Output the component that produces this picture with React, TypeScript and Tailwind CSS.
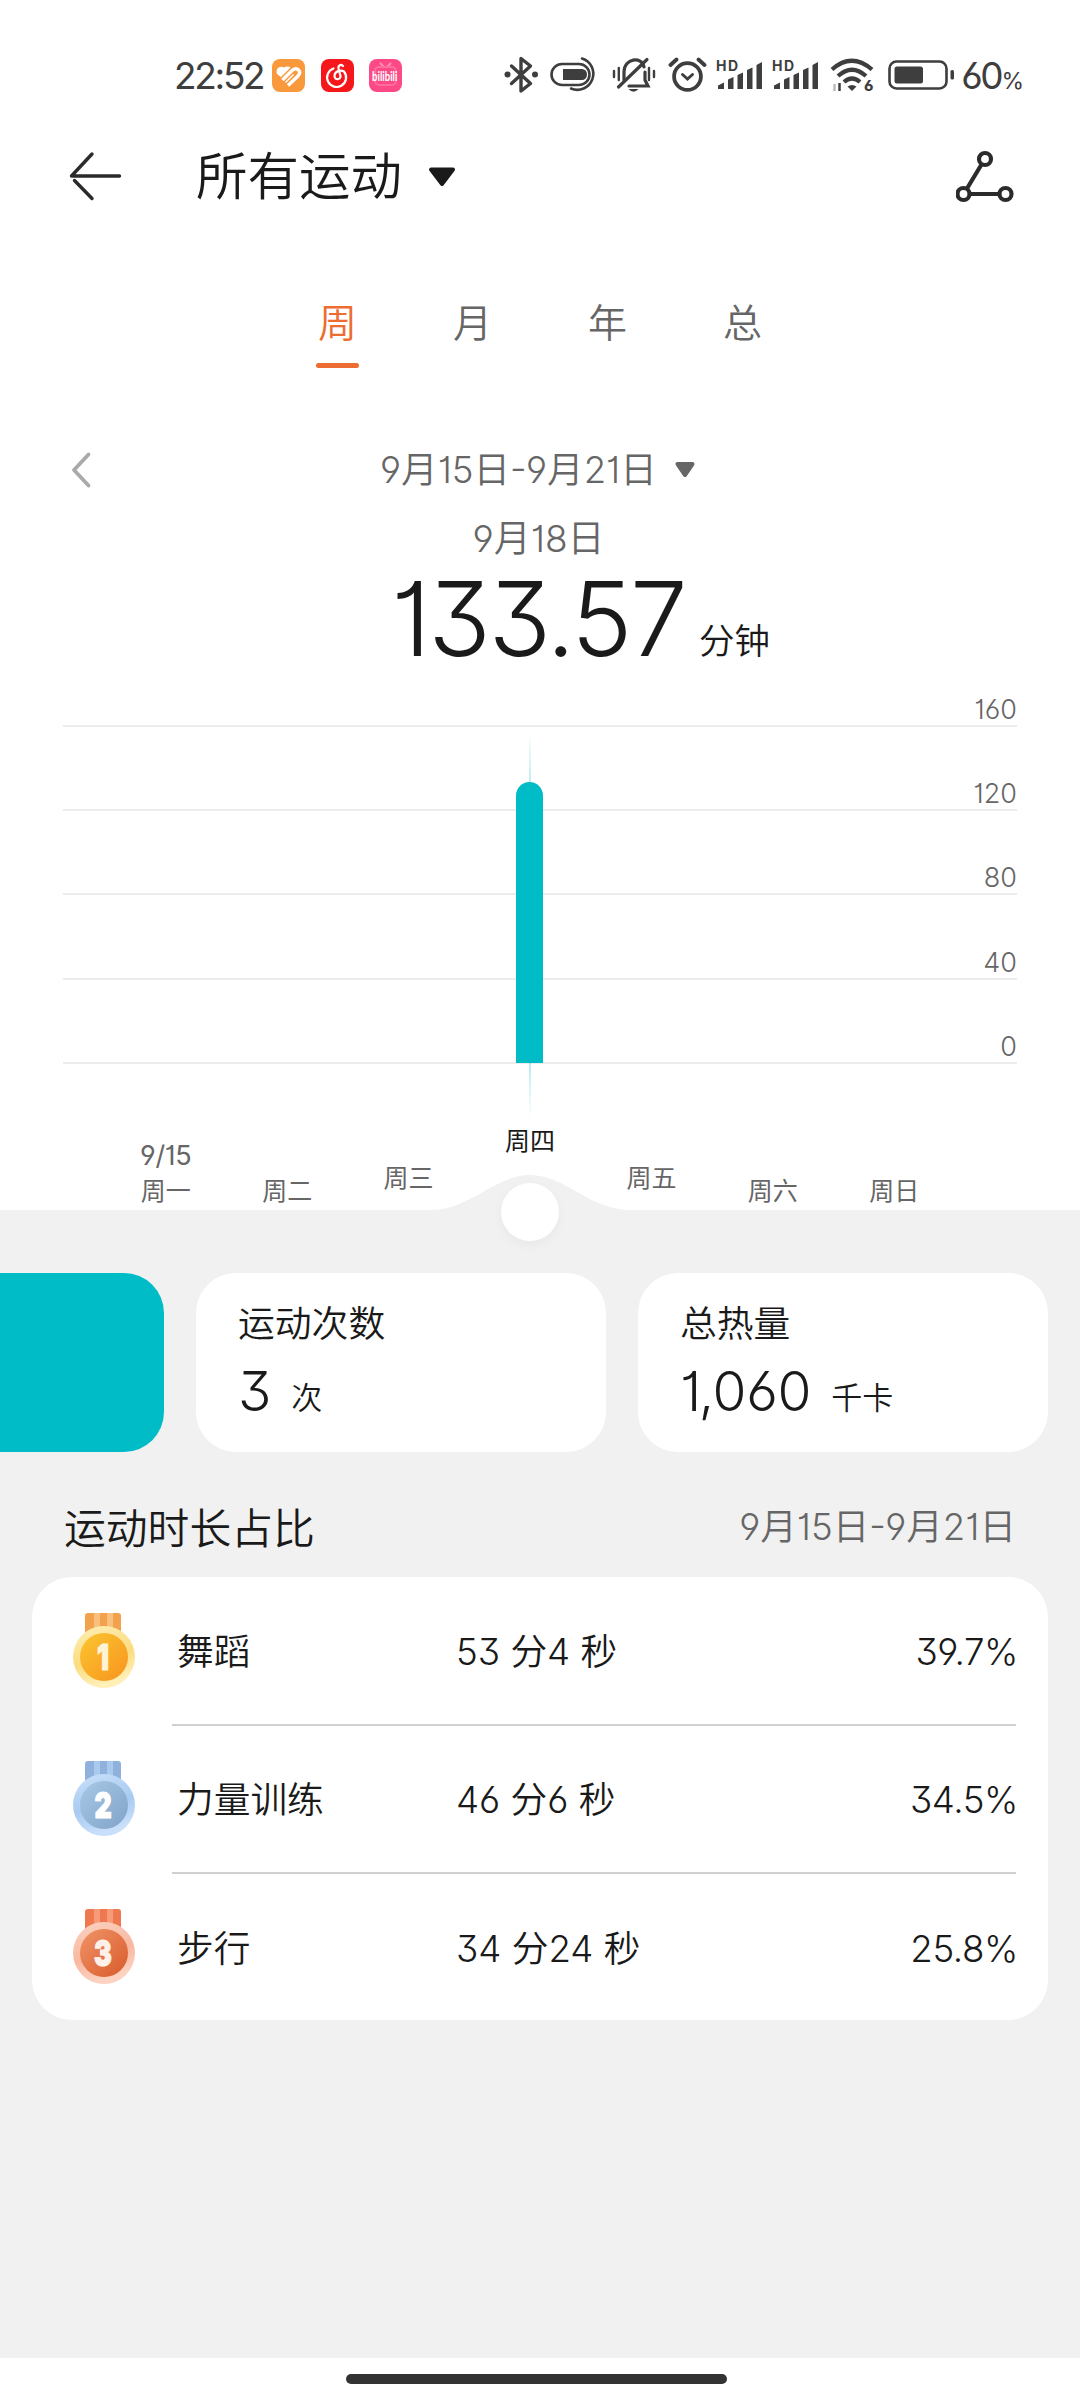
const days = [
  { label: '周一', date: '9/15', pad: 'pb-[6px]' },
  { label: '周二', pad: 'pb-[6px]' },
  { label: '周三', pad: 'pb-[19px]' },
  { label: '周四', pad: 'pb-[56px]', active: true },
  { label: '周五', pad: 'pb-[19px]' },
  { label: '周六', pad: 'pb-[6px]' },
  { label: '周日', pad: 'pb-[6px]' },
]

const medals = [
  { id: 'gold', ribbon: '#f2a24c', stripe: '#f9bf7c', rimA: '#fff0b8', rimB: '#fbdc80', faceA: '#fbc62f', faceB: '#f8931f', digit: '#fff3d6' },
  { id: 'silver', ribbon: '#8fb1dc', stripe: '#a9c9ef', rimA: '#c9e0fa', rimB: '#a9cbf2', faceA: '#a9c8e6', faceB: '#7fa3c8', digit: '#ffffff' },
  { id: 'bronze', ribbon: '#ee7850', stripe: '#f69a78', rimA: '#fcd3c2', rimB: '#f8b89f', faceA: '#f09468', faceB: '#d95a2b', digit: '#fff1ea' },
]

const rows = [
  { name: '舞蹈', time: '53 分4 秒', percent: '39.7%' },
  { name: '力量训练', time: '46 分6 秒', percent: '34.5%' },
  { name: '步行', time: '34 分24 秒', percent: '25.8%' },
]

function SignalIcon() {
  return (
    <svg className="overflow-visible" width="48" height="34" viewBox="0 0 48 34" fill="#3e3e3e">
      <text x="0" y="13" fontSize="14" fontWeight="700" fontFamily="Inter, sans-serif" textLength="22">HD</text>
      <path d="M2 31v-3.500l6-3v6.500zM12 31v-9.500l5.500-2.500v12zM21.500 31v-14l5.500-2.500v16.500zM31 31v-19l5.500-2.500v21.500zM40.500 31v-24l5.500-3v27z" />
    </svg>
  )
}

function StatusBar() {
  return (
    <div className="flex h-[110px] items-center pt-[40px] pr-[56px] pl-[174px]">
      <div className="flex h-[70px] w-full items-center justify-between">
        <div className="flex items-center">
          <span className="w-[98px] text-[37px] leading-none tracking-[-2.300px] whitespace-nowrap text-[#3e3e3e]">22:52</span>
          <div className="flex gap-[15.500px]">
            <svg width="33" height="33" viewBox="0 0 33 33">
              <rect width="33" height="33" rx="8" fill="#f9993c" />
              <path d="M5 15C3 9.500 8 6 12 8.500 14 7 17 7.500 18.500 8.500L9 18z" fill="#fff" />
              <path d="M10.500 21l9.500-9.500q4-3 6.500-.5t-.5 6L16 26.500" fill="none" stroke="#fff" strokeWidth="3.400" />
              <path d="M13.500 23.500l8-8" stroke="#fff" strokeWidth="1.500" />
            </svg>
            <svg width="33" height="33" viewBox="0 0 33 33" fill="none" stroke="#fff" strokeWidth="2.200" strokeLinecap="round">
              <rect width="33" height="33" rx="8" fill="#f6171b" stroke="none" />
              <path d="M12.500 9.500A9.500 9.500 0 1 0 23 12.500C20 10.500 13.500 12 13.500 17c0 4.500 6.500 4 6 0L17.500 9.500C17 6 20 5 22 7" />
            </svg>
            <svg className="overflow-visible" width="33" height="33" viewBox="0 0 33 33">
              <rect width="33" height="33" rx="8" fill="#fd4a86" />
              <path d="M11 4l4 4M22 4l-4 4" stroke="#ff8fb5" strokeWidth="2" />
              <rect x="6" y="8" width="21" height="18" rx="4" fill="none" stroke="#ff6d9e" strokeWidth="2" />
              <text transform="translate(3 22) scale(.74 1)" fontSize="13" fontWeight="700" fill="#fff" fontFamily="Lato, sans-serif">bilibili</text>
            </svg>
          </div>
        </div>
        <div className="flex items-center text-[#3e3e3e]">
          <svg className="mr-[11px]" width="35" height="38" viewBox="0 0 35 38" fill="none" stroke="currentColor" strokeWidth="3.400" strokeLinejoin="round" strokeLinecap="round">
            <path d="M7.500 10l19 17.500-9.500 7.500V2.500l9.500 7.500L7.500 27.500" />
            <circle cx="3.500" cy="18.500" r="3" fill="currentColor" stroke="none" />
            <circle cx="31" cy="18.500" r="3" fill="currentColor" stroke="none" />
          </svg>
          <svg className="mr-[11px]" width="51" height="38" viewBox="0 0 51 38" fill="none" stroke="currentColor" strokeWidth="2.600" strokeLinecap="round">
            <rect x="1.500" y="8" width="38" height="21" rx="10.500" />
            <path d="M13 13h19a5 5.500 0 0 1 0 11H13z" fill="currentColor" stroke="none" />
            <path d="M32 2.500a16 16 0 1 1-11 30" />
          </svg>
          <svg className="mr-[12px]" width="44" height="38" viewBox="0 0 44 38" fill="none" stroke="currentColor" strokeWidth="3.200" strokeLinecap="round">
            <path d="M2 15v6M6.800 12v12M42 15v6M37 12v12" strokeWidth="2.400" />
            <path d="M12 24v-8c0-14 18-16 20-5M33 16v8l3 6H17" />
            <path d="M6.500 31L35 3.500" />
            <path d="M16.500 33h10q-5 5.500-10 0z" fill="currentColor" stroke="none" />
          </svg>
          <svg className="mr-[9px]" width="39" height="38" viewBox="0 0 39 38" fill="none" stroke="currentColor" strokeWidth="3.800" strokeLinecap="round">
            <circle cx="19.500" cy="20.500" r="13.400" />
            <path d="M14.500 18.500l5 4.500 5-4.500" strokeWidth="3" />
            <path d="M2.500 9l6-5.500M36.500 9l-6-5.500" />
          </svg>
          <div className="mr-[10px] flex gap-2">
            <SignalIcon />
            <SignalIcon />
          </div>
          <svg className="mr-[13px] overflow-visible" width="45" height="36" viewBox="0 0 45 36" fill="none" stroke="currentColor" strokeWidth="4.200">
            <path d="M2 12.500q19.500-17.500 40 0M8 19q14-12.500 28 0M14 25q8-7 16 0" />
            <path d="M17.500 29.500q4.500-3 9 0l-4.500 4.500z" fill="currentColor" stroke="none" />
            <path d="M9.500 26v8" strokeWidth="2.500" />
            <path d="M4.500 27v7" stroke="#bbb" strokeWidth="2.500" />
            <text x="34" y="34" fontSize="15" fontWeight="800" fill="currentColor" stroke="none" fontFamily="Inter, sans-serif">6</text>
          </svg>
          <svg width="67" height="31" viewBox="0 0 67 31" fill="none">
            <rect x="1.500" y="1.500" width="57" height="27" rx="7" stroke="currentColor" strokeWidth="2.600" />
            <rect x="6.500" y="6.500" width="28.500" height="17" rx="2.500" fill="currentColor" />
            <rect x="62.500" y="10" width="3.500" height="9.500" rx="1.500" fill="currentColor" />
          </svg>
          <div className="ml-[6px] flex items-baseline whitespace-nowrap">
            <span className="text-[37px] leading-none tracking-[-2.300px]">60</span>
            <span className="text-[23px] leading-none">%</span>
          </div>
        </div>
      </div>
    </div>
  )
}

function Header() {
  return (
    <header className="flex h-[132px] items-center justify-between pr-[64px] pl-[68px]">
      <div className="flex items-center">
        <svg width="56" height="52" viewBox="0 0 56 52" fill="none" stroke="#2b2b2b" strokeWidth="3.400" strokeLinecap="round">
          <path d="M24 4L3.500 26H51.500M6.500 30.500L24 48.500" strokeLinejoin="round" />
        </svg>
        <h1 className="mt-[2px] ml-[72px] text-[51.500px] leading-none font-[350] whitespace-nowrap text-[#1a1a1a]">所有运动</h1>
        <svg className="mt-[2px] ml-[26px]" width="28" height="20" viewBox="0 0 28 20">
          <path d="M3 2.500h22L14 17z" fill="#1a1a1a" stroke="#1a1a1a" strokeWidth="4" strokeLinejoin="round" />
        </svg>
      </div>
      <svg width="60" height="54" viewBox="0 0 60 54" fill="none" stroke="#2b2b2b" strokeWidth="4.200">
        <circle cx="29" cy="10" r="6" />
        <circle cx="7.500" cy="45" r="6" />
        <circle cx="49.500" cy="45" r="6" />
        <path d="M25.500 15.500L11 39.500M14 45h29" />
      </svg>
    </header>
  )
}

function Tabs() {
  return (
    <nav className="flex h-[160px] justify-center pt-[61px] text-[39px] font-[350] text-[#666]">
      {['周', '月', '年', '总'].map((tab, i) => (
        <div key={tab} className="flex w-[135px] flex-col items-center">
          <span className={i === 0 ? 'leading-[40px] text-[#ec6c32]' : 'leading-[40px]'}>{tab}</span>
          {i === 0 && <span className="mt-[20px] h-[5px] w-[43px] rounded-full bg-[#ec6c32]" />}
        </div>
      ))}
    </nav>
  )
}

function Summary() {
  return (
    <section className="h-[286px]">
      <div className="flex h-[116px] items-center pt-[20px] pl-[70px]">
        <svg width="22" height="38" viewBox="0 0 22 38" fill="none" stroke="#aaa" strokeWidth="3.800" strokeLinecap="round" strokeLinejoin="round">
          <path d="M18.500 3.500L4 19l14.500 15.500" />
        </svg>
        <span className="ml-[288px] text-[36.600px] leading-none font-[350] whitespace-nowrap text-[#666]">9月15日-9月21日</span>
        <svg className="ml-[17px]" width="22" height="18" viewBox="0 0 22 18">
          <path d="M3.500 3h15l-7.500 11z" fill="#666" stroke="#666" strokeWidth="4" strokeLinejoin="round" />
        </svg>
      </div>
      <div className="flex h-[42px] items-center justify-center pr-[3px] text-[37px] font-[350] text-[#666]">9月18日</div>
      <div className="flex items-baseline pt-[4px] pl-[391px] whitespace-nowrap text-[#1a1a1a]">
        <span className="text-[103px] leading-[110px] font-[350] tracking-[-2.500px]">133.57</span>
        <span className="relative bottom-[2px] ml-[14px] text-[35.500px] font-[350]">分钟</span>
      </div>
    </section>
  )
}

function Chart() {
  return (
    <section className="relative h-[522px]">
      <div className="pr-[63px] pl-[63px]">
        {['160', '120', '80', '40', '0'].map((v) => (
          <div key={v} className="flex h-[84.200px] items-end justify-end border-b-2 border-[#ececec] pb-[2px] text-[27px] leading-[26px] font-[350] text-[#666] first:h-[39px]">
            {v}
          </div>
        ))}
      </div>
      {/* cursor line and bar of the selected day */}
      <div className="absolute top-[45px] left-[528.500px] h-[385px] w-[2px] bg-linear-to-b from-[#00bcc6]/0 via-[#00bcc6] to-[#00bcc6]/0" />
      <div className="absolute top-[94px] left-[516px] h-[281px] w-[27px] rounded-t-full bg-[#00bcc6]" />
      <svg className="absolute bottom-0 left-[430px]" width="200" height="36" viewBox="0 0 200 36">
        <path d="M0 36C40 36 65 1 100 1s60 35 100 35z" fill="#f1f1f1" />
      </svg>
      <div className="absolute bottom-0 left-[105px] grid h-[90px] w-[850px] grid-cols-7 text-center text-[25px] leading-[25px] text-[#666]">
        {days.map((d) => (
          <div key={d.label} className={`flex flex-col justify-end ${d.pad} ${d.active ? 'text-[#1a1a1a]' : ''}`}>
            {d.date && <span className="pb-[11px] text-[27px] tracking-[-0.300px]">{d.date}</span>}
            <span>{d.label}</span>
          </div>
        ))}
      </div>
      <div className="absolute bottom-[-31px] left-[500.500px] size-[58px] rounded-full bg-white shadow-[0_4px_12px_rgba(0,0,0,0.04)]" />
    </section>
  )
}

function StatCard({ title, value, unit }: { title: string; value: string; unit: string }) {
  return (
    <div className="h-[179px] w-[410px] shrink-0 rounded-[40px] bg-white pt-[32px] pl-[42px] text-[#1a1a1a]">
      <div className="text-[36.800px] leading-[38px] font-[350]">{title}</div>
      <div className="mt-[16px] flex items-baseline whitespace-nowrap">
        <span className="text-[55px] leading-[64px] font-[350] tracking-[-0.300px]">{value}</span>
        <span className="relative bottom-[2px] ml-[20px] text-[31px] font-[350]">{unit}</span>
      </div>
    </div>
  )
}

function Medal({ rank }: { rank: number }) {
  const m = medals[rank]
  return (
    <svg className="mb-[2px] [font-feature-settings:normal]" width="64" height="78" viewBox="0 0 64 78">
      <defs>
        <linearGradient id={`${m.id}-rim`} x1="0" y1="0" x2="0.300" y2="1">
          <stop stopColor={m.rimA} />
          <stop offset="0.600" stopColor={m.rimB} />
          <stop offset="1" stopColor={m.rimA} />
        </linearGradient>
        <linearGradient id={`${m.id}-face`} x1="0" y1="0" x2="1" y2="1">
          <stop stopColor={m.faceA} />
          <stop offset="1" stopColor={m.faceB} />
        </linearGradient>
      </defs>
      <rect x="13" y="1" width="36" height="30" rx="3" fill={m.ribbon} />
      <path d="M22 1h6v25h-6zM35 1h6v25h-6z" fill={m.stripe} />
      <circle cx="32" cy="45" r="31" fill={`url(#${m.id}-rim)`} />
      <circle cx="32" cy="45" r="24" fill={`url(#${m.id}-face)`} />
      <text transform="translate(31 58) scale(.74 1)" textAnchor="middle" fontSize="36" fontWeight="900" fontFamily="Inter, sans-serif" fill={m.digit} stroke={m.digit} strokeWidth="1.200">{rank + 1}</text>
    </svg>
  )
}

export default function App() {
  return (
    <div className="flex h-[2400px] w-[1080px] flex-col overflow-hidden bg-white font-[Inter,'Noto_Sans_CJK_SC',sans-serif] [font-feature-settings:'cv01','cv03','cv04','cv09']">
      <StatusBar />
      <Header />
      <Tabs />
      <Summary />
      <Chart />
      <main className="flex h-[1148px] flex-col bg-[#f1f1f1] pt-[63px]">
        <div className="flex gap-8">
          <div className="h-[179px] w-[164px] rounded-r-[40px] bg-[#00bcc6]" />
          <StatCard title="运动次数" value="3" unit="次" />
          <StatCard title="总热量" value="1,060" unit="千卡" />
        </div>
        <div className="flex h-[125px] items-center justify-between pt-[29px] pr-[64px] pl-[64px] whitespace-nowrap">
          <h2 className="text-[41.800px] font-[350] text-[#1a1a1a]">运动时长占比</h2>
          <span className="pb-[4px] text-[36.600px] font-[350] text-[#666]">9月15日-9月21日</span>
        </div>
        <div className="mx-8 h-[443px] rounded-[40px] bg-white pt-px pr-8 pl-[40px] text-[#1a1a1a]">
          {rows.map((row, i) => (
            <div key={row.name} className="flex h-[148px] items-center">
              <Medal rank={i} />
              <div className={`ml-[36px] flex h-full flex-1 items-center pt-px pl-[5px] text-[36.700px] font-[350] whitespace-nowrap ${i < 2 ? 'border-b-2 border-[#d0d0d0]' : ''}`}>
                <span className="w-[279px]">{row.name}</span>
                <span className="flex-1">{row.time}</span>
                <span className="mr-[-2px] tracking-[-0.400px]">{row.percent}</span>
              </div>
            </div>
          ))}
        </div>
      </main>
      <div className="flex h-[42px] items-center justify-center pr-[7px]">
        <div className="h-[10px] w-[381px] rounded-full bg-[#333]" />
      </div>
    </div>
  )
}
